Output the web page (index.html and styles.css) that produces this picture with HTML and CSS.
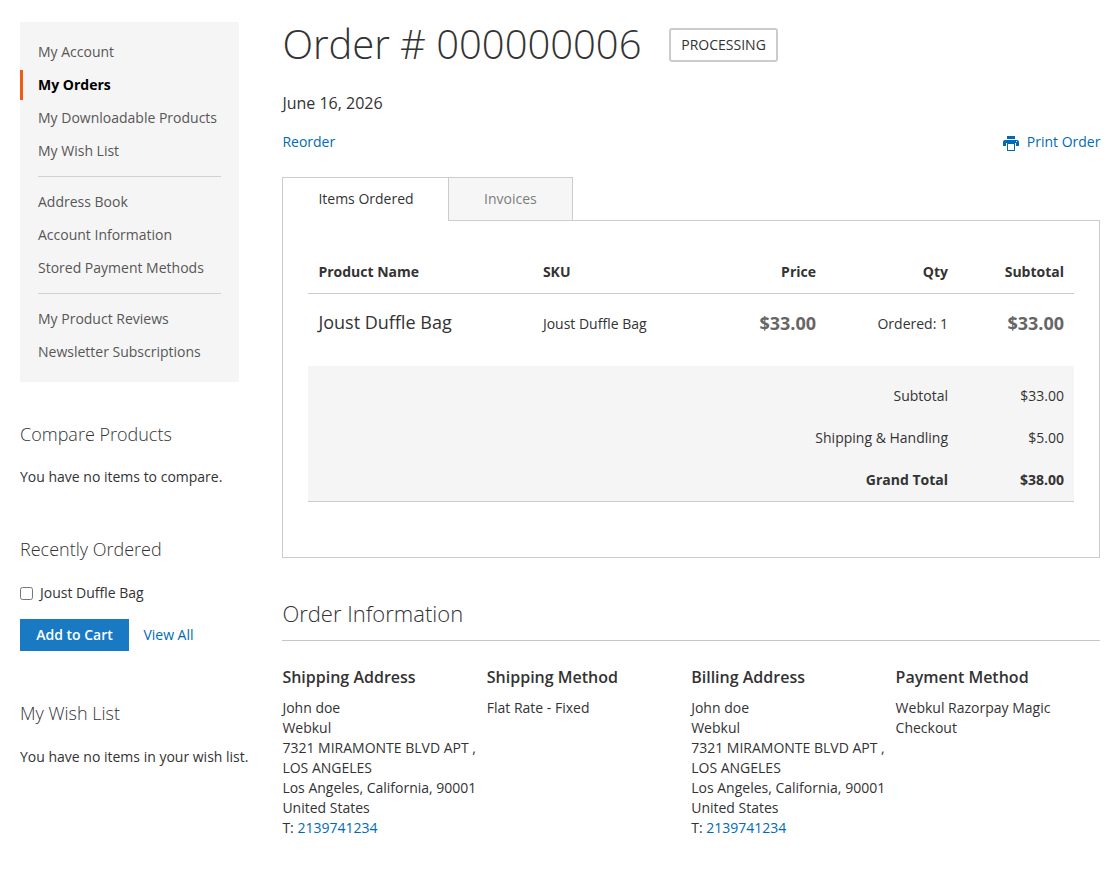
FILE: index.html
```html
<!DOCTYPE html>
<html lang="en">
<head>
  <meta charset="UTF-8">
  <title>Order # 000000006</title>
  <meta name="viewport" content="width=device-width, initial-scale=1.0">
  <link rel="stylesheet" href="styles.css">
</head>
<body>
  <div class="columns">
    <aside class="sidebar">
      <nav class="account-nav">
        <ul>
          <li><a href="#">My Account</a></li>
          <li class="current"><strong>My Orders</strong></li>
          <li><a href="#">My Downloadable Products</a></li>
          <li><a href="#">My Wish List</a></li>
          <li class="delimiter"></li>
          <li><a href="#">Address Book</a></li>
          <li><a href="#">Account Information</a></li>
          <li><a href="#">Stored Payment Methods</a></li>
          <li class="delimiter"></li>
          <li><a href="#">My Product Reviews</a></li>
          <li><a href="#">Newsletter Subscriptions</a></li>
        </ul>
      </nav>

      <section class="block block-compare">
        <h3>Compare Products</h3>
        <p>You have no items to compare.</p>
      </section>

      <section class="block block-reorder">
        <h3>Recently Ordered</h3>
        <label class="reorder-item"><input type="checkbox"><span>Joust Duffle Bag</span></label>
        <div class="actions">
          <button class="btn-primary">Add to Cart</button>
          <a href="#">View All</a>
        </div>
      </section>

      <section class="block block-wishlist">
        <h3>My Wish List</h3>
        <p>You have no items in your wish list.</p>
      </section>
    </aside>

    <main class="main">
      <div class="page-title">
        <h1>Order # 000000006</h1>
        <span class="order-status">Processing</span>
      </div>
      <div class="order-date">June 16, 2026</div>
      <div class="order-actions">
        <a href="#">Reorder</a>
        <a href="#" class="print">
          <svg width="16" height="15" viewBox="0 0 16 15" fill="#006bb4">
            <path d="M4 0h8v3H4z"/>
            <path fill-rule="evenodd" d="M2 4h12a2 2 0 0 1 2 2v4h-3V7H3v3H0V6a2 2 0 0 1 2-2zM13 5v1h1V5z"/>
            <path fill-rule="evenodd" d="M4 7h8v8H4zM5 8v6h6V8z"/>
          </svg>
          <span>Print Order</span>
        </a>
      </div>

      <div class="tabs">
        <strong class="tab active">Items Ordered</strong>
        <a href="#" class="tab">Invoices</a>
      </div>
      <div class="order-details">
        <table class="order-items">
          <thead>
            <tr>
              <th class="name">Product Name</th>
              <th class="sku">SKU</th>
              <th class="price">Price</th>
              <th class="qty">Qty</th>
              <th class="subtotal">Subtotal</th>
            </tr>
          </thead>
          <tbody>
            <tr>
              <td class="product-name">Joust Duffle Bag</td>
              <td>Joust Duffle Bag</td>
              <td class="num amount">$33.00</td>
              <td class="num">Ordered: 1</td>
              <td class="num amount">$33.00</td>
            </tr>
          </tbody>
          <tfoot>
            <tr>
              <td colspan="4">Subtotal</td>
              <td>$33.00</td>
            </tr>
            <tr>
              <td colspan="4">Shipping &amp; Handling</td>
              <td>$5.00</td>
            </tr>
            <tr class="grand-total">
              <td colspan="4">Grand Total</td>
              <td>$38.00</td>
            </tr>
          </tfoot>
        </table>
      </div>

      <section class="order-info">
        <h2>Order Information</h2>
        <div class="info-boxes">
          <div class="box">
            <h4>Shipping Address</h4>
            <address>John doe<br>Webkul<br>7321 MIRAMONTE BLVD APT ,<br>LOS ANGELES<br>Los Angeles, California, 90001<br>United States<br>T: <a href="#">2139741234</a></address>
          </div>
          <div class="box">
            <h4>Shipping Method</h4>
            <p>Flat Rate - Fixed</p>
          </div>
          <div class="box">
            <h4>Billing Address</h4>
            <address>John doe<br>Webkul<br>7321 MIRAMONTE BLVD APT ,<br>LOS ANGELES<br>Los Angeles, California, 90001<br>United States<br>T: <a href="#">2139741234</a></address>
          </div>
          <div class="box">
            <h4>Payment Method</h4>
            <p>Webkul Razorpay Magic Checkout</p>
          </div>
        </div>
      </section>
    </main>
  </div>
</body>
</html>
```

FILE: styles.css
```css
* {
  box-sizing: border-box;
}
body {
  margin: 0;
  background: #fff;
  color: #333;
  font-family: 'Open Sans', 'Noto Sans', sans-serif;
  font-size: 14px;
  line-height: 20px;
}
a {
  color: #006bb4;
  text-decoration: none;
}
h1, h2, h3, h4, p, ul {
  margin: 0;
  padding: 0;
}
.columns {
  display: flex;
  padding: 22px 20px 0;
}
.sidebar {
  width: 262.4px;
  flex: none;
}
.main {
  flex: 1;
  min-width: 0;
}

/* Account navigation */
.account-nav {
  width: 219px;
  height: 360px;
  padding: 15px 0;
  background: #f5f5f5;
}
.account-nav ul {
  list-style: none;
}
.account-nav li {
  height: 30px;
  margin-bottom: 3px;
  padding: 5px 18px 5px 15px;
  border-left: 3px solid transparent;
  white-space: nowrap;
}
.account-nav a {
  color: #575757;
}
.account-nav .current {
  border-color: #f05a14;
  color: #000;
}
.account-nav .current strong {
  font-weight: 700;
}
.account-nav .delimiter {
  height: 1px;
  margin: 10px 18px;
  padding: 0;
  border: 0;
  background: #d1d1d1;
}

/* Sidebar blocks */
.block h3 {
  font-size: 18px;
  font-weight: 300;
  line-height: 20px;
  margin-bottom: 23px;
}
.block p {
  white-space: nowrap;
}
.block-compare {
  margin-top: 42px;
}
.block-reorder {
  margin-top: 52px;
}
.block-wishlist {
  margin-top: 52px;
}
.block-wishlist h3 {
  margin-bottom: 24px;
}
.reorder-item {
  display: flex;
  align-items: center;
  margin-top: 24px;
}
.reorder-item input {
  width: 13px;
  height: 13px;
  margin: 1px 7px 0 0;
}
.actions {
  display: flex;
  align-items: center;
  gap: 14.4px;
  margin-top: 16px;
}
.btn-primary {
  width: 109px;
  height: 32px;
  padding: 0 0 2px;
  border: 1px solid #1979c3;
  background: #1979c3;
  color: #fff;
  font-family: inherit;
  font-size: 14px;
  font-weight: 600;
}

/* Order heading */
.page-title {
  display: flex;
  height: 44px;
}
.page-title h1 {
  font-size: 40px;
  font-weight: 300;
  line-height: 44px;
  letter-spacing: -0.03px;
}
.order-status {
  height: 34px;
  margin: 6px 0 0 28px;
  padding: 5px 9.8px;
  border: 2px solid #ccc;
  border-radius: 3px;
  text-transform: uppercase;
}
.order-date {
  margin-top: 26px;
  font-size: 16px;
  line-height: 22px;
}
.order-actions {
  display: flex;
  justify-content: space-between;
  margin-top: 18px;
}
.print {
  display: flex;
  gap: 7.8px;
  margin-right: -0.4px;
}
.print svg {
  margin-top: 4px;
}

/* Tabs */
.tabs {
  display: flex;
  margin-top: 25px;
}
.tab {
  height: 43px;
  padding: 11px 35px;
  border: 1px solid #ccc;
  border-left: 0;
  border-bottom: 0;
  background: #f6f6f6;
  color: #7d7d7d;
  font-weight: 400;
}
.tab.active {
  position: relative;
  z-index: 1;
  height: 44px;
  margin-bottom: -1px;
  padding-right: 34.4px;
  border-left: 1px solid #ccc;
  background: #fff;
  color: #333;
}
.order-details {
  height: 338px;
  padding: 25px;
  border: 1px solid #ccc;
}
.order-items {
  width: 100%;
  border-collapse: separate;
  border-spacing: 0;
  table-layout: fixed;
}
.order-items th,
.order-items td {
  padding: 8px 10px;
  text-align: left;
  vertical-align: top;
}
.order-items th {
  height: 48px;
  padding-top: 16px;
  border-bottom: 1px solid #ccc;
  font-weight: 700;
}
.name { width: 224.5px; }
.price { width: 130px; }
.qty { width: 132px; }
.subtotal { width: 116px; }
.order-items .price,
.order-items .qty,
.order-items .subtotal,
.order-items .num,
.order-items tfoot td {
  text-align: right;
}
.order-items tbody td {
  height: 72px;
  padding-top: 20px;
}
.order-items tbody .product-name {
  font-size: 18px;
  padding-top: 18px;
}
.order-items tbody .amount {
  padding-top: 19px;
  color: #666;
  font-size: 18px;
  font-weight: 700;
}
.order-items tfoot td {
  height: 42px;
  padding: 11px 10px;
  background: #f5f5f5;
}
.order-items tfoot tr:first-child td {
  height: 51px;
  padding-top: 20px;
}
.order-items .grand-total td {
  height: 43px;
  border-bottom: 1px solid #ccc;
  font-weight: 700;
}

/* Order information */
.order-info {
  margin-top: 42px;
}
.order-info h2 {
  height: 41px;
  border-bottom: 1px solid #c6c6c6;
  font-size: 22px;
  font-weight: 300;
  line-height: 26px;
}
.info-boxes {
  display: grid;
  grid-template-columns: repeat(4, 1fr);
  margin-top: 25px;
}
.box h4 {
  margin-bottom: 10px;
  font-size: 16px;
  font-weight: 600;
  line-height: 22px;
}
.box p {
  max-width: 180px;
}
.box address {
  font-style: normal;
  white-space: nowrap;
}
```
